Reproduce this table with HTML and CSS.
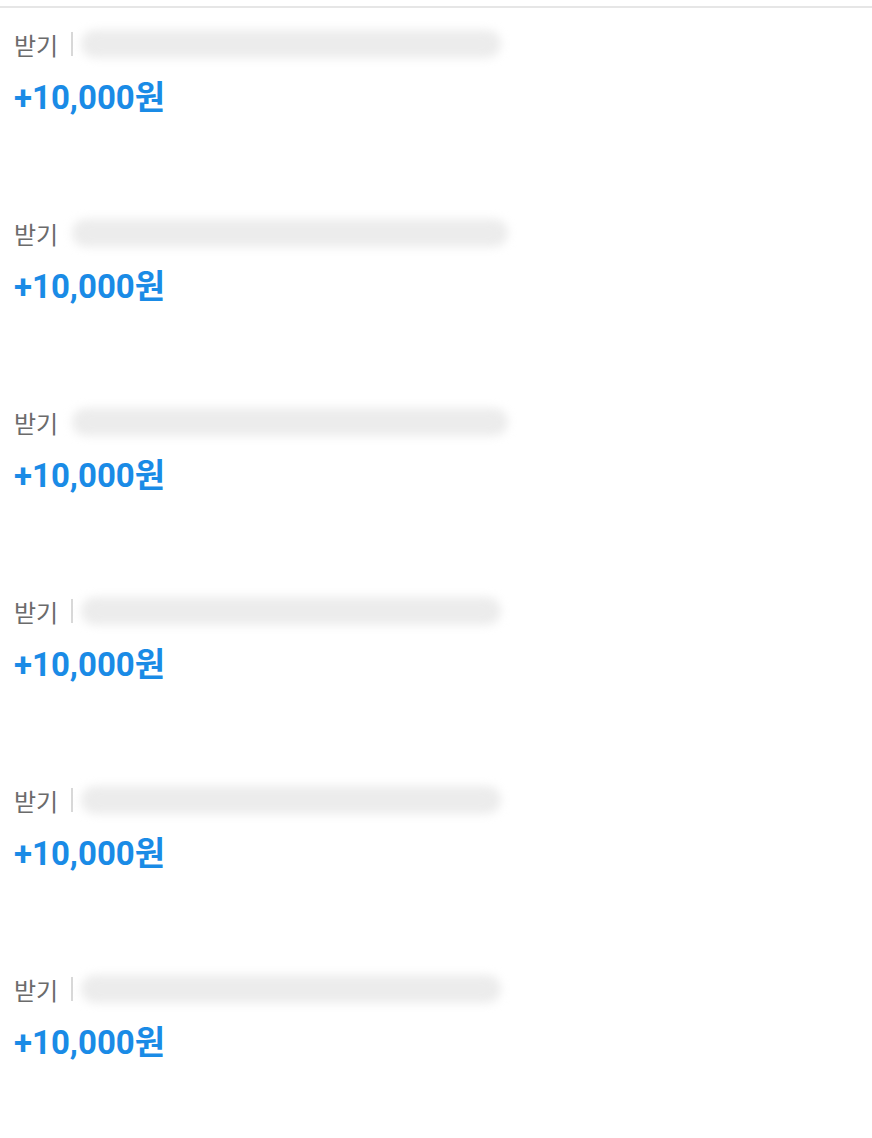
FILE: index.html
```html
<!DOCTYPE html>
<html lang="ko">
<head>
    <meta charset="UTF-8">
    <meta name="viewport" content="width=device-width, initial-scale=1.0">
    <title>받기 내역</title>
    <link rel="stylesheet" href="styles.css">
</head>
<body>
    <main class="list">
        <div class="item">
            <div class="meta"><span class="kind">받기</span><span class="sep"></span><span class="masked"></span></div>
            <p class="amount">+10,000원</p>
        </div>
        <div class="item">
            <div class="meta"><span class="kind">받기</span><span class="masked wide"></span></div>
            <p class="amount">+10,000원</p>
        </div>
        <div class="item">
            <div class="meta"><span class="kind">받기</span><span class="masked wide"></span></div>
            <p class="amount">+10,000원</p>
        </div>
        <div class="item">
            <div class="meta"><span class="kind">받기</span><span class="sep"></span><span class="masked"></span></div>
            <p class="amount">+10,000원</p>
        </div>
        <div class="item">
            <div class="meta"><span class="kind">받기</span><span class="sep"></span><span class="masked"></span></div>
            <p class="amount">+10,000원</p>
        </div>
        <div class="item">
            <div class="meta"><span class="kind">받기</span><span class="sep"></span><span class="masked"></span></div>
            <p class="amount">+10,000원</p>
        </div>
    </main>
</body>
</html>
```

FILE: styles.css
```css
:root {
    --text-gray: #6b6b6b;
    --blue: #1a8be6;
    --line: #e6e6e6;
}
body {
    margin: 0;
    padding-top: 6px;
    font-family: Roboto, "Noto Sans CJK KR", sans-serif;
    background-color: #fff;
}
.list {
    border-top: 2px solid var(--line);
}
.item {
    height: 189px;
    padding: 21px 14px 0;
    box-sizing: border-box;
}
.meta {
    display: flex;
    align-items: center;
    height: 30px;
}
.kind {
    font-size: 24px;
    color: var(--text-gray);
}
.sep {
    width: 2px;
    height: 24px;
    margin-left: 13px;
    background-color: #d8d8d8;
}
.masked {
    width: 420px;
    height: 28px;
    margin-left: 8px;
    border-radius: 14px;
    background-color: #ececec;
    filter: blur(5px);
}
.masked.wide {
    width: 436px;
    margin-left: 14px;
}
.amount {
    margin: 20px 0 0;
    font-size: 33px;
    font-weight: 700;
    color: var(--blue);
    line-height: 38px;
}
```
